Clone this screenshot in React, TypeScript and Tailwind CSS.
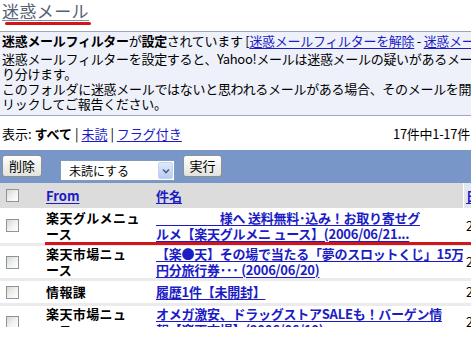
import React from 'react';

const LINK = 'text-[#1c1cc4] underline underline-offset-[2px]';

function CheckBox() {
  return (
    <span className="block w-[13px] h-[13px] border border-[#8c949c] bg-gradient-to-br from-[#d8d8d2] via-[#f0f0ec] to-white" />
  );
}

const ROWS = [
  {
    from: ['楽天グルメニュ', 'ース'],
    subject: ['\u3000\u3000\u3000\u3000\u3000様へ 送料無料･込み！お取り寄せグ', 'ルメ【楽天グルメニ ュース】(2006/06/21...'],
    date: '2006/06/21',
    h: 'h-[35px]',
    mark: true,
  },
  {
    from: ['楽天市場ニュ', 'ース'],
    subject: ['【楽●天】その場で当たる「夢のスロットくじ」15万', '円分旅行券･･･ (2006/06/20)'],
    date: '2006/06/20',
    h: 'h-[32px]',
  },
  {
    from: ['情報課'],
    subject: ['履歴1件【未開封】'],
    date: '2006/06/20',
    h: 'h-[22px]',
  },
  {
    from: ['楽天市場ニュ', 'ース'],
    subject: ['オメガ激安、ドラッグストアSALEも！バーゲン情', '報【楽天市場】(2006/06/19)'],
    date: '2006/06/19',
    h: 'h-[32px]',
  },
];

export default function App() {
  return (
    <div className="w-[471px] h-[353px] overflow-hidden bg-white font-['Noto_Sans_CJK_JP','Noto_Sans',sans-serif] text-black">
      <div className="w-[620px] h-[327px] overflow-hidden">
        {/* title */}
        <div className="h-[22px] pl-[2px] text-[17px] leading-[22px] tracking-[0.4px] text-[#566172]">
          <span className="underline underline-offset-[2px] decoration-[#8090a0]">迷惑メール</span>
        </div>
        <div className="ml-[5px] w-[86px] h-[3px] rounded-full bg-[#d4141a]" />

        {/* filter info */}
        <div className="mt-[6px] border-y border-[#9aa6ba] bg-[#eef1fa] pl-[2px] pt-[1px] pb-[4px] text-[13px] leading-[15px] tracking-[-0.3px] whitespace-nowrap">
          <div className="mb-[3px]">
            <b>迷惑メールフィルター</b>が<b>設定</b>されています [<span className={LINK}>迷惑メールフィルターを解除</span> - <span className={LINK}>迷惑メールフィルターの設定</span>]
          </div>
          <div>迷惑メールフィルターを設定すると、Yahoo!メールは迷惑メールの疑いがあるメールを自動的に迷惑メールフォルダに振</div>
          <div>り分けます。</div>
          <div>このフォルダに迷惑メールではないと思われるメールがある場合、そのメールを開いて「迷惑メールではない」をク</div>
          <div>リックしてご報告ください。</div>
        </div>

        {/* view filter */}
        <div className="mt-[10px] mb-[9px] h-[15px] flex items-center text-[13px] leading-[15px] whitespace-nowrap">
          <div className="pl-[2px] w-[393px]">
            表示: <b>すべて</b> | <span className={LINK}>未読</span> | <span className={LINK}>フラグ付き</span>
          </div>
          <div className="tracking-[-0.3px]">17件中1-17件を表示</div>
        </div>

        {/* toolbar */}
        <div className="h-[33px] bg-[#7996c8] flex items-start pt-[5px] pl-[2px] text-[13px]">
          <button className="w-[40px] h-[22px] border border-[#8d8f92] rounded-[3px] bg-gradient-to-b from-white to-[#e2e2dd] leading-[20px]">削除</button>
          <div className="ml-[18px] mt-[5px] w-[115px] h-[21px] border border-[#7f9db9] bg-white flex items-center">
            <span className="flex-1 pl-[8px] text-[12px] leading-[19px]">未読にする</span>
            <span className="w-[15px] h-[17px] mr-[1px] rounded-[2px] bg-gradient-to-b from-[#dfe9fb] to-[#b7cbf3] border border-[#c2d3f5] flex items-center justify-center">
              <svg width="8" height="6" viewBox="0 0 8 6">
                <path d="M1 1.5 L4 4.5 L7 1.5" stroke="#4d6185" strokeWidth="1.6" fill="none" />
              </svg>
            </span>
          </div>
          <button className="ml-[8px] w-[39px] h-[22px] border border-[#8d8f92] rounded-[3px] bg-gradient-to-b from-white to-[#e2e2dd] leading-[20px]">実行</button>
        </div>

        {/* table header */}
        <div className="h-[25px] flex text-[13px] font-bold">
          <div className="w-[463px] bg-[#dcdcdc] flex items-center">
            <div className="w-[40px] pl-[6px]"><CheckBox /></div>
            <div className="w-[110px] pl-[6px]"><span className={LINK}>From</span></div>
            <div className="pl-[6px]"><span className={LINK}>件名</span></div>
          </div>
          <div className="w-px bg-white" />
          <div className="flex-1 bg-[#e4e6ee] flex items-center pl-[2px]"><span className={LINK}>日付</span></div>
        </div>

        {/* rows */}
        {ROWS.map((r, i) => (
          <div key={i} className="relative border-b-[3px] border-[#ebebeb]">
            <div className={`${r.h} flex items-center text-[13px] leading-[16px] font-bold whitespace-nowrap`}>
              <div className="w-[40px] pl-[6px]"><CheckBox /></div>
              <div className="w-[110px] pl-[6px] tracking-[0.4px]">
                {r.from.map((l, j) => <div key={j}>{l}</div>)}
              </div>
              <div className="w-[313px] pl-[6px] tracking-[-0.25px] overflow-hidden">
                {r.subject.map((l, j) => (
                  <div key={j}><span className={LINK}>{l}</span></div>
                ))}
              </div>
              <div className="pl-[3px] font-normal">{r.date}</div>
            </div>
            {r.mark && <div className="absolute left-[45px] right-0 bottom-[-2px] h-[3px] bg-[#d4141a]" />}
          </div>
        ))}
      </div>
    </div>
  );
}
